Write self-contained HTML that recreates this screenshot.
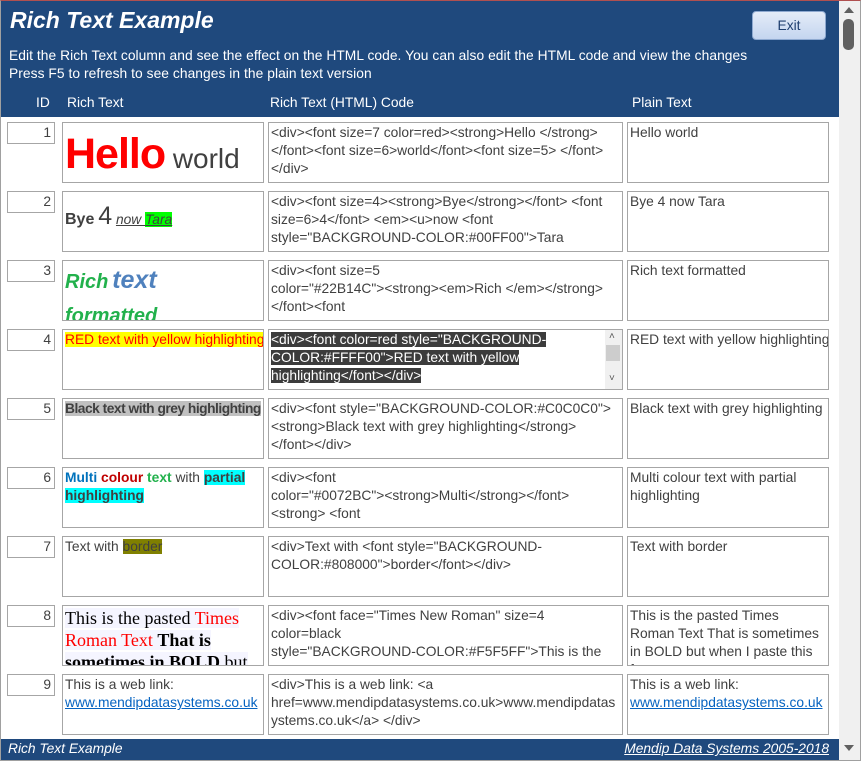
<!DOCTYPE html>
<html><head><meta charset="utf-8"><style>
*{margin:0;padding:0;box-sizing:border-box}
body{width:861px;height:761px;position:relative;overflow:hidden;background:#fff;font-family:"Liberation Sans",sans-serif;font-size:13.8px;color:#404040}
.frame{position:absolute;left:0;top:0;width:861px;height:761px;border:1px solid #a0a0a0;border-top-color:#b05050}
.hdr{position:absolute;left:1px;top:1px;width:838px;height:116px;background:#1f497d;color:#fff}
.title{position:absolute;left:9px;top:6px;font-size:23px;font-weight:bold;font-style:italic}
.desc{position:absolute;left:8px;font-size:13.8px;letter-spacing:0.05px}
.ch{position:absolute;top:94px;font-size:13.8px}
.exit{position:absolute;left:751px;top:10px;width:74px;height:29px;border:1px solid #8ea9d0;border-radius:4px;background:linear-gradient(#e4ecf8,#c4d5ef);color:#1f3f6f;text-align:center;line-height:27px;font-size:13.8px}
.sb{position:absolute;left:839px;top:1px;width:21px;height:759px;background:#f0f0f0}
.ftr{position:absolute;left:1px;top:739px;width:838px;height:21px;background:#1f497d;color:#fff;font-style:italic;font-size:13.8px}
.box{position:absolute;border:1px solid #a6a6a6;background:#fff;overflow:hidden;line-height:18px;padding:1px 2px}
.id{left:7px;width:48px;height:22px;text-align:right;padding-right:3px}
.rt{left:62px;width:202px;height:61px}
.cd{left:268px;width:355px;height:61px;padding-right:6px}
.pt{left:627px;width:202px;height:61px}
</style></head><body>
<div class="frame"></div>
<div class="hdr">
<div class="title">Rich Text Example</div>
<div class="desc" style="top:47px">Edit the Rich Text column and see the effect on the HTML code. You can also edit the HTML code and view the changes</div>
<div class="desc" style="top:65px">Press F5 to refresh to see changes in the plain text version</div>
<div class="ch" style="left:35px">ID</div>
<div class="ch" style="left:66px">Rich Text</div>
<div class="ch" style="left:269px">Rich Text (HTML) Code</div>
<div class="ch" style="left:631px">Plain Text</div>
<div class="exit">Exit</div>
</div>
<div class="sb">
<div style="position:absolute;left:5px;top:6px;width:0;height:0;border-left:5px solid transparent;border-right:5px solid transparent;border-bottom:6px solid #606060"></div>
<div style="position:absolute;left:4px;top:18px;width:11px;height:31px;background:#606060;border-radius:5px"></div>
<div style="position:absolute;left:5px;top:744px;width:0;height:0;border-left:5px solid transparent;border-right:5px solid transparent;border-top:6px solid #606060"></div>
</div>

<div class="box id" style="top:122px">1</div>
<div class="box rt" style="top:122px;line-height:60px;white-space:nowrap"><span style="color:#f00;font-weight:bold;font-size:43px;letter-spacing:-1px">Hello</span>&nbsp; <span style="font-size:28px">world</span></div>
<div class="box cd" style="top:122px">&lt;div&gt;&lt;font size=7 color=red&gt;&lt;strong&gt;Hello &lt;/strong&gt;&lt;/font&gt;&lt;font size=6&gt;world&lt;/font&gt;&lt;font size=5&gt; &lt;/font&gt;&lt;/div&gt;</div>
<div class="box pt" style="top:122px">Hello world</div>

<div class="box id" style="top:191px">2</div>
<div class="box rt" style="top:191px;padding-top:0;line-height:48px;white-space:nowrap"><span style="font-weight:bold;font-size:16px">Bye</span> <span style="font-size:25px">4</span> <span style="font-style:italic;text-decoration:underline;font-size:13.8px">now <span style="background:#0f0">Tara</span></span></div>
<div class="box cd" style="top:191px">&lt;div&gt;&lt;font size=4&gt;&lt;strong&gt;Bye&lt;/strong&gt;&lt;/font&gt; &lt;font size=6&gt;4&lt;/font&gt; &lt;em&gt;&lt;u&gt;now &lt;font style="BACKGROUND-COLOR:#00FF00"&gt;Tara</div>
<div class="box pt" style="top:191px">Bye 4 now Tara</div>

<div class="box id" style="top:260px">3</div>
<div class="box rt" style="top:260px;line-height:32px;font-weight:bold;font-style:italic;padding-top:3px"><span style="color:#22b14c;font-size:20px">Rich</span> <span style="color:#4f81bd;font-size:25px">text</span><br><span style="color:#22b14c;font-size:20px">formatted</span></div>
<div class="box cd" style="top:260px">&lt;div&gt;&lt;font size=5<br>color="#22B14C"&gt;&lt;strong&gt;&lt;em&gt;Rich &lt;/em&gt;&lt;/strong&gt;&lt;/font&gt;&lt;font</div>
<div class="box pt" style="top:260px">Rich text formatted</div>

<div class="box id" style="top:329px">4</div>
<div class="box rt" style="top:329px;white-space:nowrap"><span style="background:#ff0;color:#f00">RED text with yellow highlighting</span></div>
<div class="box cd" style="top:329px;padding-right:22px"><span style="background:#3c3c3c;color:#fff">&lt;div&gt;&lt;font color=red style="BACKGROUND-COLOR:#FFFF00"&gt;RED text with yellow highlighting&lt;/font&gt;&lt;/div&gt;</span>
<div style="position:absolute;right:0;top:0;width:17px;height:59px;background:#f0f0f0"><div style="position:absolute;left:4px;top:2px;font-size:10px;color:#555;line-height:10px">&#708;</div><div style="position:absolute;left:1px;top:15px;width:14px;height:16px;background:#cdcdcd"></div><div style="position:absolute;left:4px;top:44px;font-size:10px;color:#555;line-height:10px">&#709;</div></div></div>
<div class="box pt" style="top:329px;white-space:nowrap">RED text with yellow highlighting</div>

<div class="box id" style="top:398px">5</div>
<div class="box rt" style="top:398px;white-space:nowrap;font-weight:bold;letter-spacing:-0.5px"><span style="background:#c0c0c0">Black text with grey highlighting</span></div>
<div class="box cd" style="top:398px">&lt;div&gt;&lt;font style="BACKGROUND-COLOR:#C0C0C0"&gt;&lt;strong&gt;Black text with grey highlighting&lt;/strong&gt;&lt;/font&gt;&lt;/div&gt;</div>
<div class="box pt" style="top:398px;white-space:nowrap">Black text with grey highlighting</div>

<div class="box id" style="top:467px">6</div>
<div class="box rt" style="top:467px;font-weight:bold"><span style="color:#0072bc">Multi</span> <span style="color:#c00000">colour</span> <span style="color:#22b14c">text</span> <span style="font-weight:normal">with</span> <span style="background:#0ff">partial highlighting</span></div>
<div class="box cd" style="top:467px">&lt;div&gt;&lt;font<br>color="#0072BC"&gt;&lt;strong&gt;Multi&lt;/strong&gt;&lt;/font&gt;&lt;strong&gt; &lt;font</div>
<div class="box pt" style="top:467px">Multi colour text with partial highlighting</div>

<div class="box id" style="top:536px">7</div>
<div class="box rt" style="top:536px">Text with <span style="background:#808000">border</span></div>
<div class="box cd" style="top:536px">&lt;div&gt;Text with &lt;font style="BACKGROUND-COLOR:#808000"&gt;border&lt;/font&gt;&lt;/div&gt;</div>
<div class="box pt" style="top:536px">Text with border</div>

<div class="box id" style="top:605px">8</div>
<div class="box rt" style="top:605px;font-family:'Liberation Serif',serif;font-size:18px;line-height:22px;color:#000;background:#fff"><span style="background:#f5f5ff">This is the pasted <span style="color:#f00">Times Roman Text</span> <b>That is sometimes in BOLD</b> but</span></div>
<div class="box cd" style="top:605px">&lt;div&gt;&lt;font face="Times New Roman" size=4<br>color=black<br>style="BACKGROUND-COLOR:#F5F5FF"&gt;This is the</div>
<div class="box pt" style="top:605px">This is the pasted Times Roman Text That is sometimes in BOLD but when I paste this from a</div>

<div class="box id" style="top:674px">9</div>
<div class="box rt" style="top:674px;white-space:nowrap">This is a web link:<br><span style="color:#0563c1;text-decoration:underline">www.mendipdatasystems.co.uk</span></div>
<div class="box cd" style="top:674px;word-break:break-all">&lt;div&gt;This is a web link: &lt;a<br>href=www.mendipdatasystems.co.uk&gt;www.mendipdatasystems.co.uk&lt;/a&gt; &lt;/div&gt;</div>
<div class="box pt" style="top:674px;white-space:nowrap">This is a web link:<br><span style="color:#0563c1;text-decoration:underline">www.mendipdatasystems.co.uk</span></div>

<div class="ftr"><span style="position:absolute;left:7px;top:2px">Rich Text Example</span><span style="position:absolute;right:10px;top:2px;text-decoration:underline">Mendip Data Systems 2005-2018</span></div>
</body></html>
